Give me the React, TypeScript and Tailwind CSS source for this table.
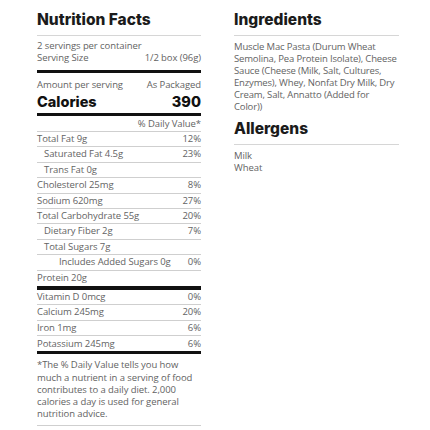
const rows: { label: string; dv?: string; indent?: number }[] = [
  { label: 'Total Fat 9g', dv: '12%' },
  { label: 'Saturated Fat 4.5g', dv: '23%', indent: 1 },
  { label: 'Trans Fat 0g', indent: 1 },
  { label: 'Cholesterol 25mg', dv: '8%' },
  { label: 'Sodium 620mg', dv: '27%' },
  { label: 'Total Carbohydrate 55g', dv: '20%' },
  { label: 'Dietary Fiber 2g', dv: '7%', indent: 1 },
  { label: 'Total Sugars 7g', indent: 1 },
  { label: 'Includes Added Sugars 0g', dv: '0%', indent: 2 },
]

const vitamins = [
  { label: 'Vitamin D 0mcg', dv: '0%' },
  { label: 'Calcium 245mg', dv: '20%' },
  { label: 'Iron 1mg', dv: '6%' },
  { label: 'Potassium 245mg', dv: '6%' },
]

const heading = "font-['Inter',sans-serif] font-extrabold text-[15.5px] leading-[20px] tracking-normal text-[#1b1b1b]"

function Row({ label, dv, indent = 0, last = false }: { label: string; dv?: string; indent?: number; last?: boolean }) {
  const pad = indent === 2 ? 'pl-[22px]' : indent === 1 ? 'pl-[7px]' : ''
  return (
    <div
      className={`flex justify-between items-center h-[15.4px] ${last ? '' : 'border-b border-[#cfcfcf]'}`}
    >
      <span className={pad}>{label}</span>
      {dv && <span>{dv}</span>}
    </div>
  )
}

export default function App() {
  return (
    <div className="w-[430px] h-[430px] bg-white flex gap-[33px] pl-[37px] pt-[10px] font-['Open_Sans',sans-serif] text-[9.5px] tracking-[-0.08px] text-[#636363]">
      <div className="w-[164px] flex flex-col">
        <h2 className={`${heading} pb-[5px] border-b border-[#d6d6d6]`}>Nutrition Facts</h2>
        <div className="pt-[4px] leading-[12px]">
          <div>2 servings per container</div>
          <div className="flex justify-between">
            <span>Serving Size</span>
            <span>1/2 box (96g)</span>
          </div>
        </div>
        <div className="h-[3px] bg-[#111] mt-[6px]" />
        <div className="flex justify-between mt-[6px] leading-[12px]">
          <span>Amount per serving</span>
          <span>As Packaged</span>
        </div>
        <div className="flex justify-between items-center mt-[1px] font-['Inter',sans-serif] font-extrabold text-[14.5px] leading-[20px] tracking-normal text-[#111]">
          <span>Calories</span>
          <span>390</span>
        </div>
        <div className="h-[3px] bg-[#111] mt-[1px]" />
        <div className="text-right h-[16px] leading-[16px] border-b border-[#cfcfcf]">% Daily Value*</div>
        {rows.map((r) => (
          <Row key={r.label} {...r} />
        ))}
        <Row label="Protein 20g" last />
        <div className="h-[4px] bg-[#111]" />
        {vitamins.map((r, i) => (
          <Row key={r.label} {...r} last={i === vitamins.length - 1} />
        ))}
        <div className="h-[3px] bg-[#111]" />
        <p className="pt-[5px] pb-[5px] leading-[12.2px] border-b border-[#cfcfcf]">
          *The % Daily Value tells you how much a nutrient in a serving of food contributes to a daily diet. 2,000 calories a day is used for general nutrition advice.
        </p>
      </div>
      <div className="w-[165px] flex flex-col">
        <h2 className={`${heading} pb-[5px] border-b border-[#d6d6d6]`}>Ingredients</h2>
        <p className="pt-[5px] leading-[12px] tracking-[-0.16px]">
          Muscle Mac Pasta (Durum Wheat Semolina, Pea Protein Isolate), Cheese Sauce (Cheese (Milk, Salt, Cultures, Enzymes), Whey, Nonfat Dry Milk, Dry Cream, Salt, Annatto (Added for Color))
        </p>
        <h2 className={`${heading} mt-[6px] pb-[5px] border-b border-[#d6d6d6]`}>Allergens</h2>
        <div className="pt-[5px] leading-[12px]">
          <div>Milk</div>
          <div>Wheat</div>
        </div>
      </div>
    </div>
  )
}
